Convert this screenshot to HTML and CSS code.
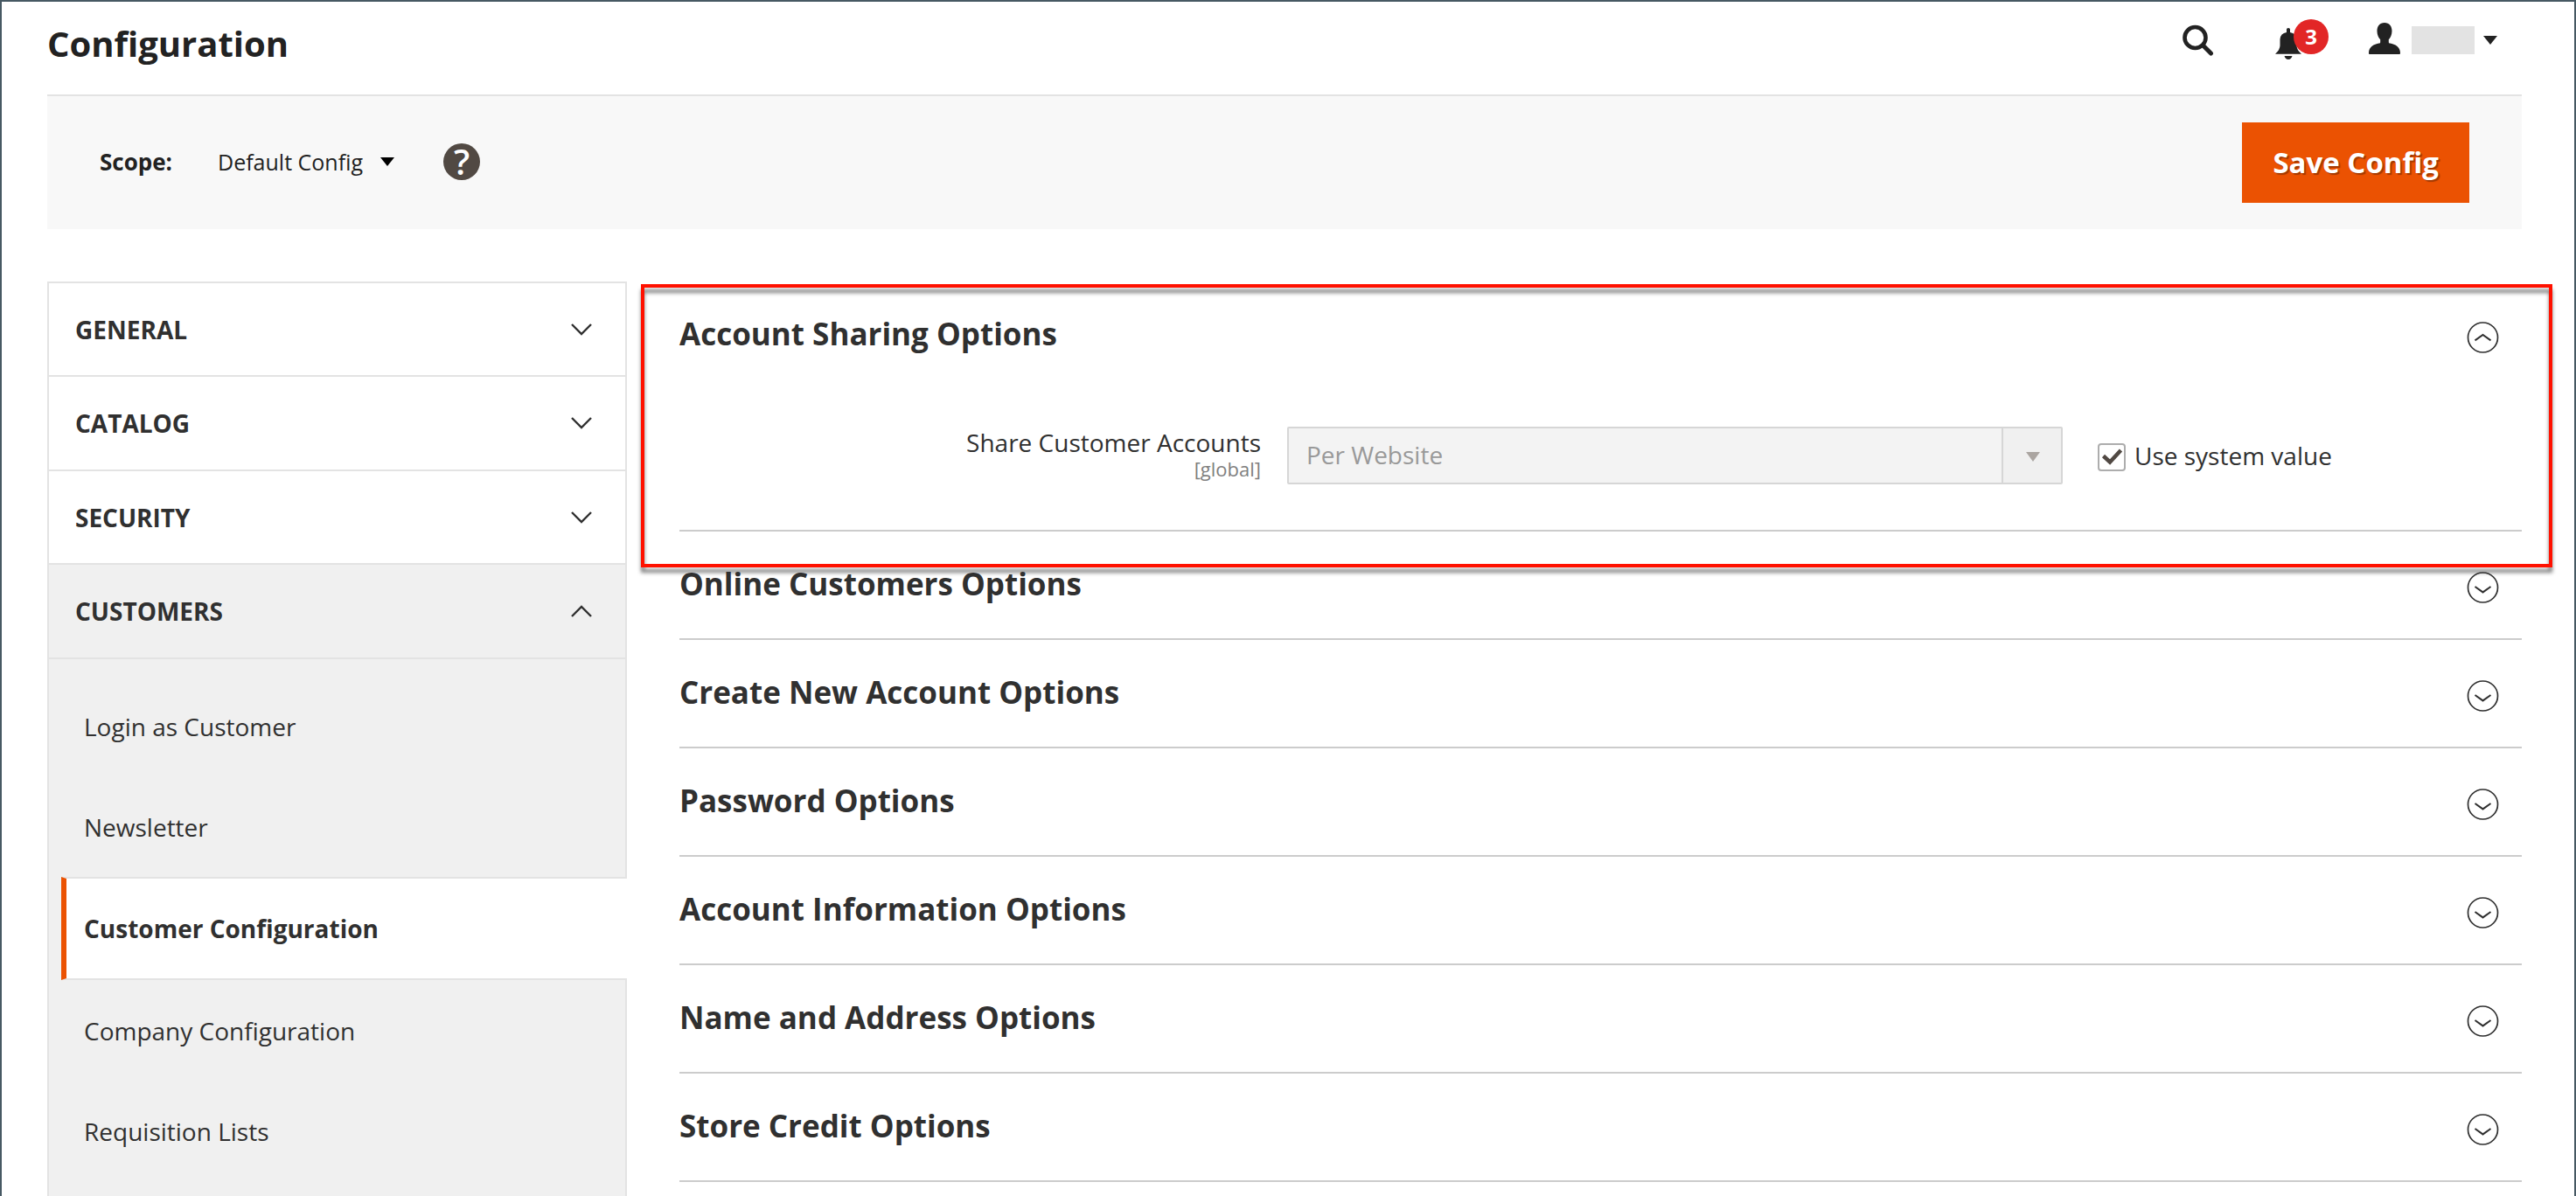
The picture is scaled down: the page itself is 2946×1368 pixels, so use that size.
FILE: index.html
```html
<!DOCTYPE html>
<html lang="en">
<head>
<meta charset="utf-8">
<title>Configuration</title>
<meta name="viewport" content="width=device-width, initial-scale=1">
<link rel="stylesheet" href="styles.css">
</head>
<body>
<svg class="sprite" aria-hidden="true">
  <symbol id="chevron" viewBox="0 0 24 14"><path d="M1 1l11 11L23 1" fill="none" stroke="currentColor" stroke-width="2.4"/></symbol>
  <symbol id="circle-down" viewBox="0 0 36 36"><g fill="none" stroke="currentColor" stroke-width="1.7"><circle cx="18" cy="18" r="17"/><path d="M9 17l9 6.4 9-6.4" stroke-width="2"/></g></symbol>
  <symbol id="circle-up" viewBox="0 0 36 36"><g fill="none" stroke="currentColor" stroke-width="1.7"><circle cx="18" cy="18" r="17"/><path d="M9 21.4l9-6.4 9 6.4" stroke-width="2"/></g></symbol>
</svg>

<header class="page-header">
  <h1 class="page-title">Configuration</h1>
  <div class="header-tools">
    <button class="icon-button" type="button" aria-label="Search">
      <svg width="36" height="36" viewBox="0 0 36 36"><g fill="none" stroke="currentColor"><circle cx="14.5" cy="15" r="12" stroke-width="4.6"/><path d="M23.500 24l9 9" stroke-width="5" stroke-linecap="round"/></g></svg>
    </button>
    <button class="icon-button notifications" type="button" aria-label="Notifications">
      <svg width="30" height="36" viewBox="0 0 30 36"><path d="M13 5V1.500Q13 0 15 0t2 1.500V5q7 1 7.500 8v7q0 5 5.500 9.800H0q5.500-4.800 5.500-9.800v-7Q6 6 13 5zM10.500 32h9q-1.200 4-4.500 4t-4.500-4z" fill="currentColor"/></svg>
      <span class="badge">3</span>
    </button>
    <button class="icon-button account" type="button" aria-label="Account">
      <svg class="person" width="36" height="36" viewBox="0 0 36 36"><path d="M18 0c5.500 0 8.500 4 8.500 9.500 0 4.500-1.700 7.500-3.700 9.800v2.900c0 .9.500 1.300 1.500 1.400C30 24.400 36 28 36 34.500c0 1-.3 1.500-1.300 1.500H1.300C.3 36 0 35.500 0 34.500 0 28 6 24.400 11.700 23.600c1-.1 1.500-.5 1.500-1.400v-2.900C11.200 17 9.500 14 9.500 9.500 9.500 4 12.500 0 18 0z" fill="currentColor"/></svg>
      <span class="account-name"></span>
      <span class="caret"></span>
    </button>
  </div>
</header>

<section class="toolbar">
  <div class="scope">
    <span class="scope-label" id="scope-label">Scope:</span>
    <button class="scope-switch" type="button" aria-haspopup="true" aria-describedby="scope-label">Default Config<span class="caret"></span></button>
    <button class="help" type="button" aria-label="Help">?</button>
  </div>
  <button class="save" type="submit">Save Config</button>
</section>

<main class="content">
  <nav class="sidebar">
    <button class="nav-group" type="button">GENERAL<svg class="chevron"><use href="#chevron"/></svg></button>
    <button class="nav-group" type="button">CATALOG<svg class="chevron"><use href="#chevron"/></svg></button>
    <button class="nav-group" type="button">SECURITY<svg class="chevron"><use href="#chevron"/></svg></button>
    <button class="nav-group open" type="button" aria-expanded="true">CUSTOMERS<svg class="chevron"><use href="#chevron"/></svg></button>
    <div class="nav-items">
      <a class="nav-item" href="#">Login as Customer</a>
      <a class="nav-item" href="#">Newsletter</a>
      <a class="nav-item current" href="#" aria-current="page">Customer Configuration</a>
      <a class="nav-item" href="#">Company Configuration</a>
      <a class="nav-item" href="#">Requisition Lists</a>
    </div>
  </nav>

  <div class="sections">
    <section class="section highlighted">
      <button class="section-head" type="button" aria-expanded="true"><span class="section-title">Account Sharing Options</span><svg class="toggle"><use href="#circle-up"/></svg></button>
      <div class="field">
        <label class="field-label" for="share">Share Customer Accounts<span class="field-scope">[global]</span></label>
        <div class="select">
          <select id="share" disabled><option>Per Website</option></select>
        </div>
        <label class="inherit"><input type="checkbox" checked>Use system value</label>
      </div>
    </section>
    <section class="section"><button class="section-head" type="button"><span class="section-title">Online Customers Options</span><svg class="toggle"><use href="#circle-down"/></svg></button></section>
    <section class="section"><button class="section-head" type="button"><span class="section-title">Create New Account Options</span><svg class="toggle"><use href="#circle-down"/></svg></button></section>
    <section class="section"><button class="section-head" type="button"><span class="section-title">Password Options</span><svg class="toggle"><use href="#circle-down"/></svg></button></section>
    <section class="section"><button class="section-head" type="button"><span class="section-title">Account Information Options</span><svg class="toggle"><use href="#circle-down"/></svg></button></section>
    <section class="section"><button class="section-head" type="button"><span class="section-title">Name and Address Options</span><svg class="toggle"><use href="#circle-down"/></svg></button></section>
    <section class="section"><button class="section-head" type="button"><span class="section-title">Store Credit Options</span><svg class="toggle"><use href="#circle-down"/></svg></button></section>
  </div>
</main>
</body>
</html>
```
FILE: styles.css
```css
*, *::before, *::after { box-sizing: border-box; }

body {
  display: flex;
  flex-direction: column;
  min-height: 100vh;
  margin: 0;
  padding: 0 60px 0 52px;
  border: 2px solid #475963;
  border-bottom: 0;
  background: #fff;
  color: #303030;
  font: 28px/38px "Open Sans", "Noto Sans", sans-serif;
}

button, select { font: inherit; color: inherit; }
button { margin: 0; padding: 0; border: 0; background: none; text-align: left; cursor: pointer; }
.sprite { position: absolute; width: 0; height: 0; }

.caret {
  border: 8px solid transparent;
  border-top: 10px solid currentColor;
  border-bottom: 0;
}

/* Header */
.page-header {
  display: flex;
  justify-content: space-between;
  height: 108px;
  border-bottom: 2px solid #e3e3e3;
  color: #222;
}
.page-title { margin: 20px 0 0; font-size: 40px; line-height: 56px; font-weight: 700; }
.header-tools { display: flex; align-items: flex-start; padding: 24px 28px 0 0; }
.icon-button { display: flex; align-items: center; height: 40px; }
.notifications { position: relative; margin: 4px 0 0 70px; }
.badge {
  position: absolute;
  top: -8px;
  left: 21px;
  width: 40px;
  height: 40px;
  border-radius: 50%;
  background: #e22626;
  color: #fff;
  font-size: 24px;
  font-weight: 700;
  line-height: 40px;
  text-align: center;
}
.account { margin-left: 77px; }
.person { margin-bottom: 4px; }
.account-name { width: 72px; height: 32px; margin: 0 10px 0 13px; background: #e3e3e3; }

/* Toolbar */
.toolbar {
  display: flex;
  justify-content: space-between;
  align-items: center;
  padding: 30px 60px;
  background: #f8f8f8;
  color: #222;
}
.scope { display: flex; align-items: center; padding-bottom: 3px; font-size: 26px; }
.scope-label { font-weight: 700; }
.scope-switch { display: flex; align-items: center; gap: 20px; margin: 0 56px 0 52px; font-size: 25px; }
.scope-switch .caret { color: #000; }
.help {
  width: 42px;
  height: 42px;
  border-radius: 50%;
  background: #514943;
  color: #fff;
  font-size: 40px;
  font-weight: 600;
  line-height: 42px;
  text-align: center;
}
.save {
  padding: 24px 35px;
  background: #eb5202;
  color: #fff;
  font-size: 33px;
  font-weight: 700;
  line-height: 44px;
  text-shadow: 2px 2px 1px rgba(0, 0, 0, .3);
}

/* Two columns */
.content {
  display: grid;
  grid-template-columns: minmax(0, 663fr) minmax(0, 2107fr);
  column-gap: 60px;
  flex: 1;
  padding-top: 60px;
}

/* Sidebar */
.sidebar { display: flex; flex-direction: column; border: 2px solid #e3e3e3; border-bottom: 0; }
.nav-group {
  display: flex;
  justify-content: space-between;
  align-items: center;
  height: 107px;
  padding: 0 38px 0 30px;
  border-bottom: 2px solid #e3e3e3;
  font-weight: 700;
}
.nav-group:nth-child(even) { height: 108px; }
.nav-group.open { background: #f0f0f0; }
.nav-group.open .chevron { transform: rotate(180deg); }
.chevron { width: 24px; height: 14px; }
.nav-items { flex: 1; padding: 19px 0 0 14px; background: #f0f0f0; }
.nav-item {
  display: flex;
  align-items: center;
  height: 115px;
  padding: 0 20px 0 26px;
  color: #303030;
  text-decoration: none;
}
.nav-item.current {
  height: 118px;
  margin-right: -2px;
  padding-left: 20px;
  border: 2px solid #e3e3e3;
  border-width: 2px 0;
  background: #fff;
  box-shadow: none;
  font-weight: 700;
  position: relative;
  border-left: 6px solid #eb5202;
}

/* Sections */
.section { position: relative; border-bottom: 2px solid #ccc; }
.section-head {
  display: flex;
  justify-content: space-between;
  align-items: center;
  width: 100%;
  padding: 40px 26px 40px 0;
}
.section-title { padding-bottom: 2px; font-size: 35px; font-weight: 700; line-height: 40px; }
.toggle { width: 37px; height: 36px; margin-top: 6px; }

.highlighted::after {
  content: "";
  position: absolute;
  inset: 3px -35px -43px -44px;
  border: 4px solid #ff1100;
  filter: drop-shadow(0 6px 2px rgba(0, 0, 0, .5));
  pointer-events: none;
}

.field { display: grid; grid-template-columns: 695fr 887fr 525fr; padding: 44px 0 52px; }
.field-label { padding-right: 30px; line-height: 36px; text-align: right; }
.field-scope { display: block; color: #808080; font-size: 22px; line-height: 24px; }
.select { position: relative; }
.select select {
  width: 100%;
  height: 66px;
  padding: 0 90px 2px 20px;
  border: 2px solid #d6d6d6;
  border-radius: 2px;
  appearance: none;
  background: #f3f3f3;
  color: #999;
  opacity: 1;
}
.select::before {
  content: "";
  position: absolute;
  top: 2px;
  right: 2px;
  bottom: 2px;
  width: 68px;
  border-left: 2px solid #d6d6d6;
  background: #f0f0f0;
  pointer-events: none;
}
.select::after {
  content: "";
  position: absolute;
  top: 29px;
  right: 26px;
  border: 8px solid transparent;
  border-top: 11px solid #aba5a1;
  border-bottom: 0;
  pointer-events: none;
}
.inherit { display: flex; align-items: center; gap: 10px; padding-left: 40px; }
.inherit input {
  flex: none;
  width: 32px;
  height: 32px;
  margin: 4px 0 0;
  border: 2px solid #adadad;
  border-radius: 4px;
  appearance: none;
  background: #fff url("data:image/svg+xml,%3Csvg xmlns='http://www.w3.org/2000/svg' viewBox='0 0 28 28'%3E%3Cpath d='M4.500 12.500l7.500 7L24.500 6' fill='none' stroke='%23514943' stroke-width='4.500'/%3E%3C/svg%3E") center / 28px no-repeat;
}
```
